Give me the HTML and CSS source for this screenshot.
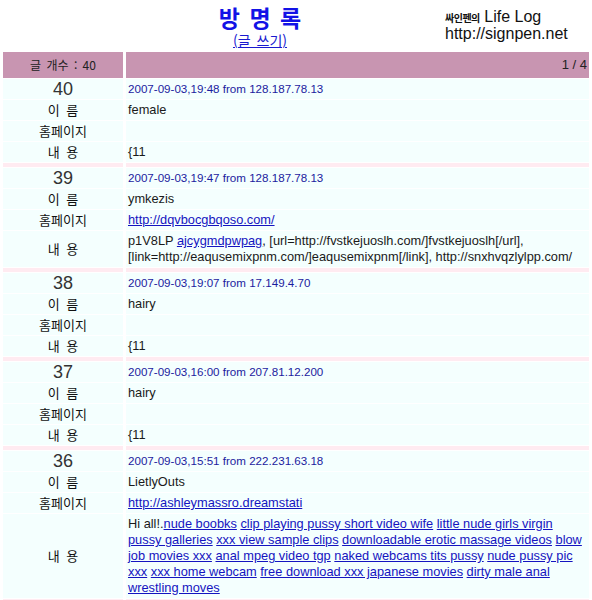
FILE: index.html
```html
<!DOCTYPE html>
<html lang="ko">
<head>
<meta charset="utf-8">
<title>방명록</title>
<link rel="stylesheet" href="styles.css">
</head>
<body>
<div class="top">
  <div class="title">
    <h1>방 명 록</h1>
    <a href="#" class="write">(글 쓰기)</a>
  </div>
  <div class="logo">
    <div class="logo1"><span class="ko">싸인펜의</span> Life Log</div>
    <div class="logo2">http://signpen.net</div>
  </div>
</div>
<table class="book">
  <colgroup><col class="c1"><col class="c2"></colgroup>
  <tr class="head"><td class="hl">글 개수 : 40</td><td class="hr">1 / 4</td></tr>

  <tr class="row"><td class="num">40</td><td class="date">2007-09-03,19:48 from 128.187.78.13</td></tr>
  <tr class="row"><td class="lab">이 름</td><td class="val">female</td></tr>
  <tr class="row"><td class="lab">홈페이지</td><td class="val"></td></tr>
  <tr class="row"><td class="lab">내 용</td><td class="val">{11</td></tr>
  <tr class="sep"><td></td><td></td></tr>

  <tr class="row"><td class="num">39</td><td class="date">2007-09-03,19:47 from 128.187.78.13</td></tr>
  <tr class="row"><td class="lab">이 름</td><td class="val">ymkezis</td></tr>
  <tr class="row"><td class="lab">홈페이지</td><td class="val"><a href="#">http://dqvbocgbqoso.com/</a></td></tr>
  <tr class="row"><td class="lab">내 용</td><td class="val txt">p1V8LP <a href="#">ajcygmdpwpag</a>, [url=http://fvstkejuoslh.com/]fvstkejuoslh[/url],<br>[link=http://eaqusemixpnm.com/]eaqusemixpnm[/link], http://snxhvqzlylpp.com/</td></tr>
  <tr class="sep"><td></td><td></td></tr>

  <tr class="row"><td class="num">38</td><td class="date">2007-09-03,19:07 from 17.149.4.70</td></tr>
  <tr class="row"><td class="lab">이 름</td><td class="val">hairy</td></tr>
  <tr class="row"><td class="lab">홈페이지</td><td class="val"></td></tr>
  <tr class="row"><td class="lab">내 용</td><td class="val">{11</td></tr>
  <tr class="sep"><td></td><td></td></tr>

  <tr class="row"><td class="num">37</td><td class="date">2007-09-03,16:00 from 207.81.12.200</td></tr>
  <tr class="row"><td class="lab">이 름</td><td class="val">hairy</td></tr>
  <tr class="row"><td class="lab">홈페이지</td><td class="val"></td></tr>
  <tr class="row"><td class="lab">내 용</td><td class="val">{11</td></tr>
  <tr class="sep"><td></td><td></td></tr>

  <tr class="row"><td class="num">36</td><td class="date">2007-09-03,15:51 from 222.231.63.18</td></tr>
  <tr class="row"><td class="lab">이 름</td><td class="val">LietlyOuts</td></tr>
  <tr class="row"><td class="lab">홈페이지</td><td class="val"><a href="#">http://ashleymassro.dreamstati</a></td></tr>
  <tr class="row"><td class="lab">내 용</td><td class="val txt">Hi all!.<a href="#">nude boobks</a> <a href="#">clip playing pussy short video wife</a> <a href="#">little nude girls virgin<br>pussy galleries</a> <a href="#">xxx view sample clips</a> <a href="#">downloadable erotic massage videos</a> <a href="#">blow<br>job movies xxx</a> <a href="#">anal mpeg video tgp</a> <a href="#">naked webcams tits pussy</a> <a href="#">nude pussy pic<br>xxx</a> <a href="#">xxx home webcam</a> <a href="#">free download xxx japanese movies</a> <a href="#">dirty male anal<br>wrestling moves</a></td></tr>
  <tr class="sep"><td></td><td></td></tr>
</table>
</body>
</html>
```
FILE: styles.css
```css
html, body {
  margin: 0;
  padding: 0;
  background: #ffffff;
}
body {
  font-family: "Liberation Sans", "Noto Sans CJK KR", sans-serif;
  font-size: 12px;
  color: #1a1a1a;
  width: 592px;
}
.top {
  display: flex;
  height: 51px;
}
.title {
  margin-left: 190px;
  width: 140px;
  text-align: center;
}
.title h1 {
  margin: 0;
  padding-top: 3px;
  font-family: "Noto Sans CJK KR", sans-serif;
  font-size: 23px;
  line-height: 28px;
  font-weight: 700;
  word-spacing: 3px;
  color: #1212e6;
}
.write {
  display: inline-block;
  margin-top: 1px;
  font-family: "Noto Sans CJK KR", sans-serif;
  font-size: 14px;
  line-height: 17px;
  word-spacing: 2px;
  color: #1a1ad0;
}
.logo {
  margin-left: 115px;
  padding-top: 9px;
  font-family: "Liberation Sans", sans-serif;
  font-size: 16px;
  line-height: 16px;
  color: #111;
}
.logo .ko {
  font-family: "Noto Sans CJK KR", sans-serif;
  font-size: 10px;
  font-weight: 700;
  letter-spacing: -0.5px;
}
.book {
  width: 592px;
  table-layout: fixed;
  border-collapse: separate;
  border-spacing: 3px 1px;
}
.c1 { width: 120px; }
.book td {
  padding: 2px 2px 2px;
  height: 20px;
  box-sizing: border-box;
  line-height: 16px;
  vertical-align: middle;
}
.book .head td {
  background: #c895b1;
  height: 26px;
  color: #222;
}
.hl {
  text-align: center;
  font-family: "Noto Sans CJK KR", "Liberation Sans", sans-serif;
  font-size: 12px;
  word-spacing: 2px;
}
.hr {
  text-align: right;
  font-size: 13px;
}
.row td {
  background: #f4fffe;
}
.num {
  text-align: center;
  font-size: 18px;
  color: #333;
}
.lab {
  text-align: center;
  font-family: "Noto Sans CJK KR", sans-serif;
  font-size: 13px;
  word-spacing: 3px;
  color: #111;
}
.date {
  color: #1c1c9e;
  font-size: 11.6px;
}
.val {
  font-size: 12.8px;
}
.val a {
  color: #1414c0;
  text-decoration: underline;
}
.txt {
  white-space: nowrap;
}
.book .sep td {
  height: 4px;
  padding: 0;
  background: #ffebf1;
}
```
